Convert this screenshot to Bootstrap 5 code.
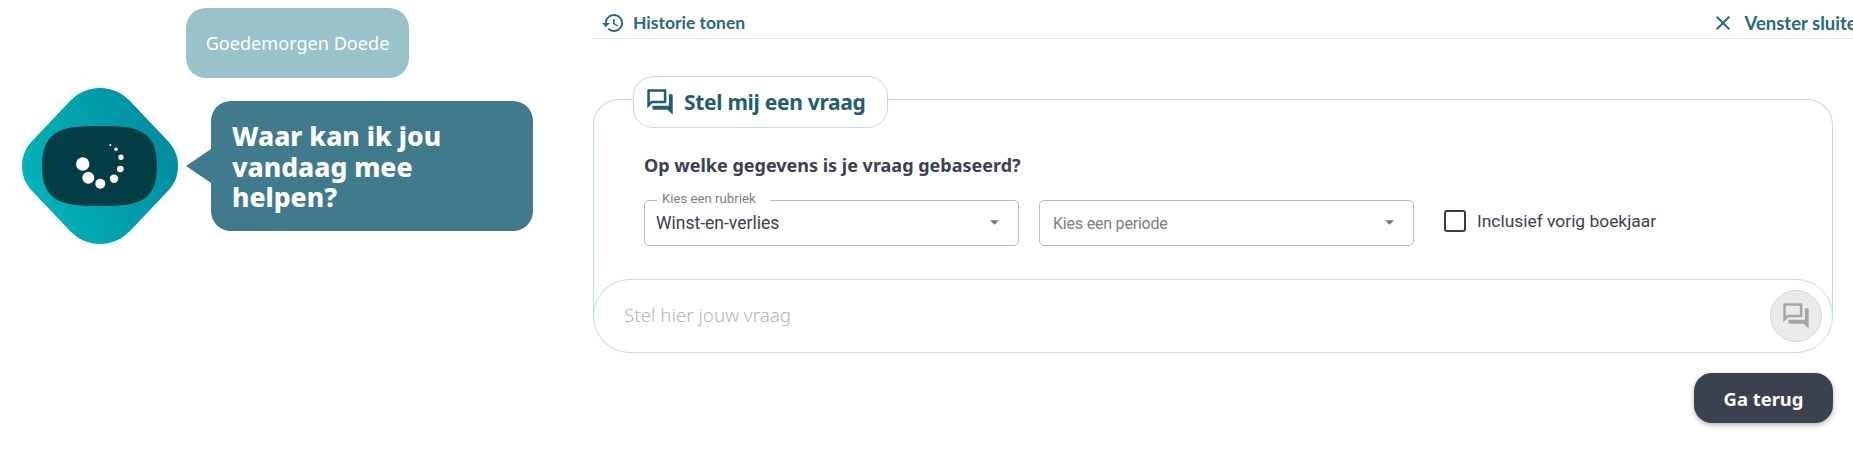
<!DOCTYPE html>
<html lang="nl">
<head>
<meta charset="utf-8">
<title>Stel mij een vraag</title>
<link href="https://cdn.jsdelivr.net/npm/bootstrap@5.3.0/dist/css/bootstrap.min.css" rel="stylesheet">
<style>
html,body{height:462px;overflow:hidden;background:#fff}
body{font-family:"Noto Sans",sans-serif;color:#3c4150}
.left-pane{width:593px;flex:none}
.greet{margin:8px 0 0 186px;width:223px;height:70px;border-radius:20px;background:#99c2cb;color:#fff;font:400 18.1px "Noto Sans",sans-serif}
.bot-row{margin:10px 0 0 22px}
.bot-logo{width:156px;height:156px;flex:none}
.speech{position:relative;margin:13px 0 0 33px;width:322px;height:130px;border-radius:20px;background:#3f7a8d;color:#fff;padding:20px 21px;font:800 26.5px/30.5px "Noto Sans",sans-serif}
.speech::before{content:"";position:absolute;left:-25px;top:48px;border-style:solid;border-width:17px 25px 17px 0;border-color:transparent #3f7a8d transparent transparent}
.right-pane{width:1260px;flex:none}
.top-bar{height:39px;margin-right:-14px;border-bottom:1px solid #e0e3e5;padding:7px 0 0 8px;color:#2b6a7c;font:700 17.5px/24px "Lato",sans-serif}
.top-bar .ico{width:24px;height:24px;fill:#2b6a7c}
.top-bar .gap-w{gap:8px}
.top-bar .close-link{gap:10px;font-size:18.5px}
.panel{margin:60px 20px 0 0;height:216px;border:1px solid #bfdde3;border-bottom:0;border-radius:26px 26px 0 0}
.legend-pill{margin:-24px 0 0 39px;width:255px;height:52px;border:1px solid #bfdde3;border-radius:20px;background:#fff;padding-left:12px;gap:10px;color:#1f5f70;font:700 21px "Noto Sans",sans-serif;letter-spacing:-.3px}
.legend-pill svg{width:28px;height:28px;fill:#1f5f70}
.ask-head{margin:25px 0 23px 50px;font:700 18px/24px "Noto Sans",sans-serif;color:#3c4150}
.field-row{margin-left:50px;height:46px}
.sel-wrap{position:relative;width:375px;margin-right:20px}
.sel-wrap .form-select{height:46px;border:1px solid #bbb;border-radius:5px;padding:0 30px 0 11px;font:400 17.5px "Roboto",sans-serif;color:#3c4150;background-size:9px 5px;background-position:right 19px top 19px;background-image:url("data:image/svg+xml,%3csvg xmlns='http://www.w3.org/2000/svg' viewBox='0 0 10 5'%3e%3cpath d='M0 0h10L5 5z' fill='%23777'/%3e%3c/svg%3e")}
.sel-wrap .form-select.is-empty{color:#808080;padding-left:13px;font-size:16px;letter-spacing:-.2px}
.float-lab{position:absolute;left:13px;top:-9px;padding:0 14px 0 5px;background:#fff;font:400 13.2px/15px "Roboto",sans-serif;color:#808080}
.chk-row{margin:0 0 4px 10px;gap:11px;font:400 17.4px "Roboto",sans-serif;color:#3c4150}
.chk-row .form-check-input{width:22px;height:22px;margin:0;border:2px solid #3c3c3c;border-radius:3px}
.pill-box{margin:33px -1px 0 -1px;height:74px;border:1px solid #bfdde3;border-radius:37px;background:transparent;padding:0 10px 0 30px}
.pill-box input{font:300 18.8px "Noto Sans",sans-serif;color:#3c4150;padding:0 0 2px;border:0;background:transparent;outline:0}
.pill-box input::placeholder{color:#b5b5bd}
.send-btn{width:52px;height:52px;flex:none;border:1px solid #bfdde3;border-radius:50%;background:#ebebeb}
.send-btn svg{width:28px;height:28px;fill:#a6a6a6}
.foot-row{margin:58px 20px 0 0}
.back-btn{width:139px;height:50px;border-radius:18px;background:#3c4150;border:0;color:#fff;font:700 18.4px "Noto Sans",sans-serif;box-shadow:0 2px 5px rgba(0,0,0,.3)}
</style>
</head>
<body class="m-0 d-flex">
<div class="left-pane">
  <div class="greet d-flex align-items-center justify-content-center">Goedemorgen Doede</div>
  <div class="bot-row d-flex align-items-start">
    <svg class="bot-logo" viewBox="22 88 156 156" role="img" aria-label="Assistent">
      <defs><linearGradient id="lg" x1="0" y1="0.7" x2="1" y2="0.3"><stop offset="0" stop-color="#00b6ba"/><stop offset="1" stop-color="#008b9f"/></linearGradient></defs>
      <path fill="url(#lg)" d="M100 88C112 88 122 93 130 101L166 139C174 147 178 155 178 166C178 177 174 185 166 193L130 231C122 239 112 244 100 244C88 244 78 239 70 231L34 193C26 185 22 177 22 166C22 155 26 147 34 139L70 101C78 93 88 88 100 88Z"/>
      <path fill="#023d45" d="M100 126C135 126 157 128 157 166C157 204 135 206 100 206C65 206 42 204 42 166C42 128 65 126 100 126Z"/>
      <g fill="#fff"><circle cx="82.7" cy="164" r="6.7"/><circle cx="88.3" cy="177.7" r="6"/><circle cx="100.3" cy="183.7" r="5"/><circle cx="114" cy="178.7" r="4.2"/><circle cx="120.3" cy="169" r="3.3"/><circle cx="121" cy="157.3" r="2.7"/><circle cx="116" cy="149.3" r="1.8"/><circle cx="110.3" cy="145" r="1"/></g>
    </svg>
    <div class="speech">Waar kan ik jou vandaag mee helpen?</div>
  </div>
</div>
<div class="right-pane">
  <div class="top-bar d-flex justify-content-between">
    <div class="d-flex align-items-center gap-w"><svg class="ico" viewBox="0 0 24 24"><path d="M13 3c-4.97 0-9 4.03-9 9H1l3.89 3.89.07.14L9 12H6c0-3.87 3.13-7 7-7s7 3.13 7 7-3.13 7-7 7c-1.93 0-3.68-.79-4.94-2.06l-1.42 1.42C8.27 19.99 10.51 21 13 21c4.97 0 9-4.03 9-9s-4.03-9-9-9zm-1 5v5l4.28 2.54.72-1.21-3.5-2.08V8H12z"/></svg><span>Historie tonen</span></div>
    <div class="d-flex align-items-center close-link"><svg class="ico" viewBox="0 0 24 24"><path d="M19 6.41L17.59 5 12 10.59 6.41 5 5 6.41 10.59 12 5 17.59 6.41 19 12 13.41 17.59 19 19 17.59 13.41 12z"/></svg><span>Venster sluiten</span></div>
  </div>
  <div class="panel">
    <div class="legend-pill d-flex align-items-center"><svg viewBox="1 1 22 22"><path d="M15 4v7H5.17L4 12.17V4h11m1-2H3c-.55 0-1 .45-1 1v14l4-4h10c.55 0 1-.45 1-1V3c0-.55-.45-1-1-1zm5 4h-2v9H6v2c0 .55.45 1 1 1h11l4 4V7c0-.55-.45-1-1-1z"/></svg><span>Stel mij een vraag</span></div>
    <div class="ask-head">Op welke gegevens is je vraag gebaseerd?</div>
    <div class="field-row d-flex align-items-center">
      <div class="sel-wrap"><label class="float-lab">Kies een rubriek</label><select class="form-select"><option>Winst-en-verlies</option></select></div>
      <div class="sel-wrap"><select class="form-select is-empty"><option>Kies een periode</option></select></div>
      <div class="chk-row d-flex align-items-center"><input class="form-check-input" type="checkbox" id="vb"><label for="vb">Inclusief vorig boekjaar</label></div>
    </div>
    <div class="pill-box d-flex align-items-center">
      <input class="flex-grow-1" type="text" placeholder="Stel hier jouw vraag">
      <div class="send-btn d-flex align-items-center justify-content-center"><svg viewBox="1 1 22 22"><path d="M15 4v7H5.17L4 12.17V4h11m1-2H3c-.55 0-1 .45-1 1v14l4-4h10c.55 0 1-.45 1-1V3c0-.55-.45-1-1-1zm5 4h-2v9H6v2c0 .55.45 1 1 1h11l4 4V7c0-.55-.45-1-1-1z"/></svg></div>
    </div>
  </div>
  <div class="foot-row d-flex justify-content-end"><button class="btn back-btn" type="button">Ga terug</button></div>
</div>
</body>
</html>
